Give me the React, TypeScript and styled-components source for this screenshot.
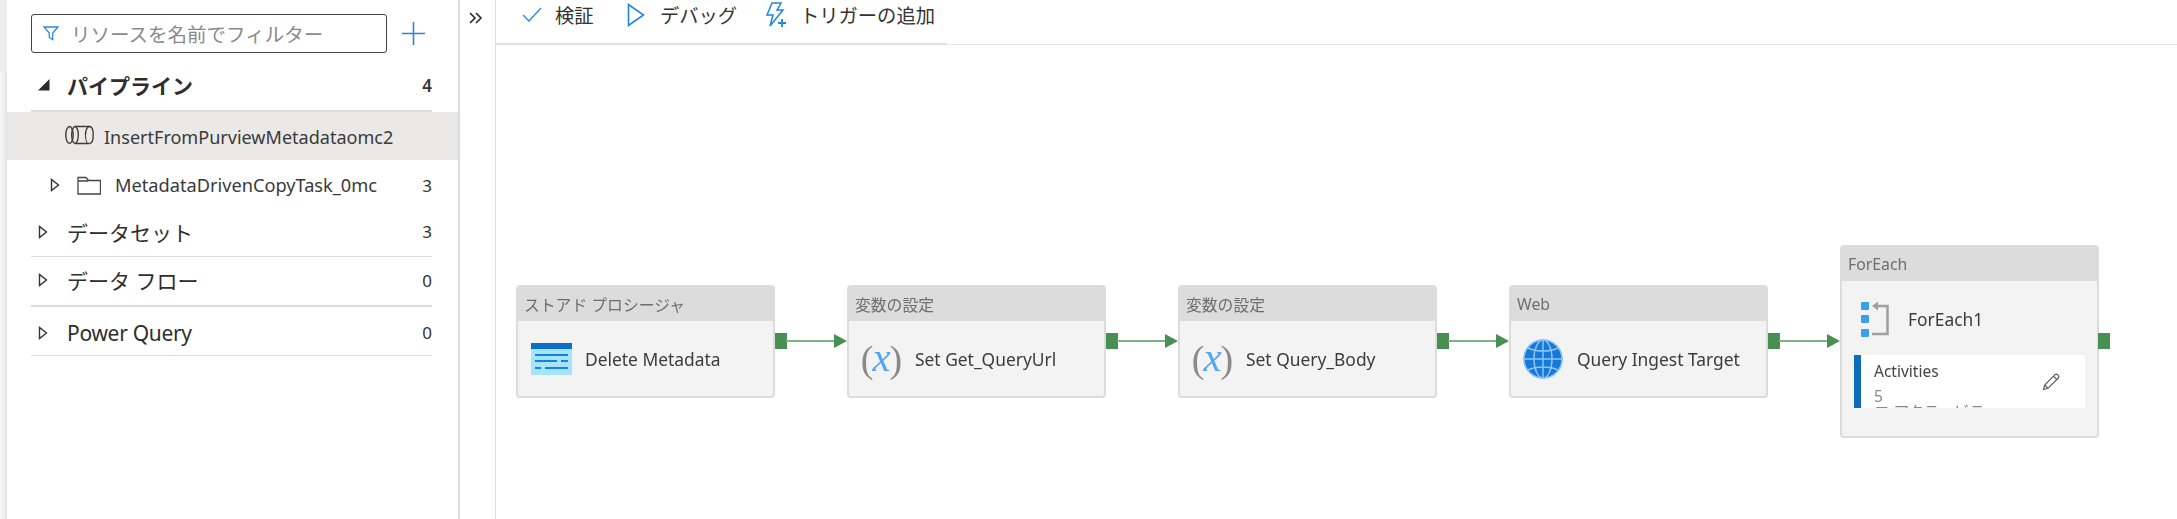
import React from "react";
import styled, { createGlobalStyle } from "styled-components";

const FONT = `"Noto Sans", "Noto Sans CJK JP", sans-serif`;

const GlobalStyle = createGlobalStyle`
  html, body {
    margin: 0;
    padding: 0;
    height: 519px;
    overflow: hidden;
    background: #fff;
    font-family: ${FONT};
  }
`;

const FilterIcon = () => (
  <svg width="18" height="18" viewBox="0 0 18 18" fill="none" stroke="#2b88d8" strokeWidth="1.3">
    <path d="M2 3h14l-5.3 6v6.5l-3.4-2V9z" />
  </svg>
);
const PlusIcon = () => (
  <svg width="23" height="23" viewBox="0 0 23 23" stroke="#3a7fd5" strokeWidth="1.6">
    <path d="M11.500 0v23M0 11.500h23" />
  </svg>
);
const Caret = ({ open }: { open?: boolean }) =>
  open ? (
    <svg width="12" height="12" viewBox="0 0 12 12">
      <path d="M0 11.5h11.5V0z" fill="#2b2b2b" />
    </svg>
  ) : (
    <svg width="10" height="14" viewBox="0 0 10 14" fill="none" stroke="#333" strokeWidth="1.4">
      <path d="M1.5 1.5v11L8.5 7z" />
    </svg>
  );
const PipelineIcon = () => (
  <svg width="29" height="20" viewBox="0 0 29 20" fill="none" stroke="#3c3c3c" strokeWidth="1.4">
    <ellipse cx="4.500" cy="10" rx="3.700" ry="8.500" />
    <ellipse cx="10" cy="10" rx="3.300" ry="8.500" />
    <path d="M10 1.500h14.500M10 18.500h14.500" />
    <path d="M20.500 10c0-4.500 1.500-8.500 4-8.500s3.700 4 3.700 8.500-1.200 8.500-3.700 8.500" />
    <path d="M20.500 10c0 4.500 1 7 2 8.500" strokeWidth="1" />
  </svg>
);
const FolderIcon = () => (
  <svg width="24" height="19" viewBox="0 0 24 19" fill="none" stroke="#444" strokeWidth="1.3">
    <path d="M1 18V1.500h8l2.500 3h12V18zM1 5h10" />
  </svg>
);
const Chevrons = () => (
  <svg width="14" height="12" viewBox="0 0 14 12" fill="none" stroke="#222" strokeWidth="1.500">
    <path d="M1 1l5 5-5 5M7 1l5 5-5 5" />
  </svg>
);
const CheckIcon = () => (
  <svg width="20" height="16" viewBox="0 0 20 16" fill="none" stroke="#2b88d8" strokeWidth="1.300">
    <path d="M1 8l6 6L19 1" />
  </svg>
);
const PlayIcon = () => (
  <svg width="18" height="24" viewBox="0 0 18 24" fill="none" stroke="#1d86e0" strokeWidth="1.600">
    <path d="M1.500 1.500v21L16.500 12z" />
  </svg>
);
const TriggerIcon = () => (
  <svg width="22" height="26" viewBox="0 0 22 26" fill="none" stroke="#1d86e0" strokeWidth="1.500">
    <path d="M7 1h9l-4 7h6L5 24l3-11H2z" />
    <path d="M17 17v8M13 21h8" strokeWidth="1.800" />
  </svg>
);
const StoredProcIcon = () => (
  <svg width="41" height="32" viewBox="0 0 41 32">
    <rect width="41" height="32" rx="1" fill="#a5e4fb" />
    <rect width="41" height="6" fill="#0a6fcb" />
    <path d="M4 12h33M4 18h22M30 18h7M4 25h6M14 25h23" stroke="#1483dc" strokeWidth="2" />
  </svg>
);
const GlobeIcon = () => (
  <svg width="40" height="40" viewBox="0 0 40 40" fill="none">
    <circle cx="20" cy="20" r="19.500" fill="#1878d8" />
    <g stroke="#8cc8f6" strokeWidth="1.400">
      <circle cx="20" cy="20" r="19" />
      <ellipse cx="20" cy="20" rx="9" ry="19" />
      <path d="M20 1v38M1 20h38M5 9c8 4 22 4 30 0M5 31c8-4 22-4 30 0" />
    </g>
  </svg>
);
const ForEachIcon = () => (
  <svg width="28" height="37" viewBox="0 0 28 37">
    <rect x="0" y="1" width="8" height="8" rx="1" fill="#3aa0ec" />
    <rect x="0" y="14" width="8" height="8" rx="1" fill="#3aa0ec" />
    <rect x="0" y="28" width="8" height="8" rx="1" fill="#3aa0ec" />
    <path d="M16 5h10.500v28H11" fill="none" stroke="#a0a0a0" strokeWidth="2.500" />
    <path d="M11 5l6-4.500v9z" fill="#a0a0a0" />
  </svg>
);
const PencilIcon = () => (
  <svg width="18" height="18" viewBox="0 0 18 18" fill="none" stroke="#555" strokeWidth="1.100">
    <path d="M1.500 16.500l1.200-4.500L13 1.700a1.700 1.700 0 0 1 2.400 0l.9.9a1.700 1.700 0 0 1 0 2.400L6 15.300zM2.700 12L6 15.300M11.500 3.200l3.300 3.300" />
  </svg>
);

const Page = styled.div`
  display: flex;
  width: 2177px;
  height: 519px;
  overflow: hidden;
`;
const EdgeStrip = styled.div`
  width: 7px;
  flex-shrink: 0;
  background:
    linear-gradient(#ececec, #ececec) top left / 100% 72px no-repeat,
    linear-gradient(90deg, #f8f8f8 0%, #efefef 60%, #e2e2e2 100%);
`;
const Sidebar = styled.aside`
  width: 451px;
  flex-shrink: 0;
  border-right: 2px solid #dcdcdc;
  display: flex;
  flex-direction: column;
`;
const SearchRow = styled.div`
  display: flex;
  align-items: center;
  padding: 14px 0 0 24px;
  height: 38px;
  gap: 15px;
`;
const SearchBox = styled.div`
  box-sizing: border-box;
  width: 356px;
  height: 39px;
  border: 1px solid #444;
  border-radius: 3px;
  display: flex;
  align-items: center;
  padding-left: 10px;
  gap: 11px;
  color: #8a8a8a;
  font-size: 19.500px;
  white-space: nowrap;
`;
const Section = styled.div<{ $height: number; $thick?: boolean; $shift?: number; $lift?: number }>`
  box-sizing: border-box;
  height: ${(p) => p.$height}px;
  margin: 0 26px 0 24px;
  padding-top: ${(p) => p.$shift ?? 0}px;
  padding-bottom: ${(p) => p.$lift ?? 0}px;
  border-bottom: ${(p) => (p.$thick ? 2 : 1)}px solid #dcdcdc;
  display: flex;
  align-items: center;
  color: #2e2e2e;
  font-size: 21px;
`;
const CaretSlot = styled.span`
  width: 36px;
  padding-left: 7px;
  box-sizing: border-box;
  display: flex;
  align-items: center;
`;
const Label = styled.span<{ $bold?: boolean; $tight?: boolean }>`
  flex: 1;
  font-weight: ${(p) => (p.$bold ? 700 : 400)};
  letter-spacing: ${(p) => (p.$tight ? "-0.3px" : "0")};
  white-space: nowrap;
`;
const Count = styled.span<{ $bold?: boolean }>`
  font-size: 17px;
  font-weight: ${(p) => (p.$bold ? 600 : 400)};
  width: 10px;
  text-align: right;
  color: #333;
`;
const SelectedRow = styled.div`
  height: 48px;
  background: #ebe9e7;
  display: flex;
  align-items: center;
  padding-left: 58px;
  gap: 10px;
  color: #3a3a3a;
  font-size: 18.050px;
  white-space: nowrap;
  span {
    padding-top: 2px;
  }
  svg {
    margin-top: -3px;
  }
`;
const FolderRow = styled.div`
  height: 50px;
  margin: 0 26px 0 0;
  display: flex;
  align-items: center;
  padding-left: 43px;
  color: #3a3a3a;
  font-size: 18.200px;
  gap: 17px;
  white-space: nowrap;
`;
const FolderName = styled.span`
  flex: 1;
  margin-left: -3px;
`;
const CollapseColumn = styled.div`
  width: 36px;
  flex-shrink: 0;
  border-right: 1px solid #dcdcdc;
  padding: 7px 0 0 9px;
  box-sizing: border-box;
`;
const Main = styled.main`
  flex: 1;
  display: flex;
  flex-direction: column;
`;
const Toolbar = styled.div`
  height: 45px;
  box-sizing: border-box;
  flex-shrink: 0;
  border-bottom: 1px solid #e6e6e6;
  position: relative;
  display: flex;
  align-items: flex-start;
  padding: 2px 0 0 26px;
  &::after {
    content: "";
    position: absolute;
    left: 0;
    bottom: -1px;
    width: 450px;
    height: 2px;
    background: #e0e0e0;
  }
`;
const ToolButton = styled.div<{ $gap: number; $width: number }>`
  display: flex;
  align-items: center;
  height: 26px;
  width: ${(p) => p.$width}px;
  gap: ${(p) => p.$gap}px;
  font-size: 19.300px;
  color: #333;
  white-space: nowrap;
`;
const Canvas = styled.div`
  position: relative;
  flex: 1;
`;
const Node = styled.div<{ $x: number; $y: number; $h: number }>`
  position: absolute;
  left: ${(p) => p.$x}px;
  top: ${(p) => p.$y}px;
  width: 259px;
  height: ${(p) => p.$h}px;
  box-sizing: border-box;
  border: 2px solid #dcdcdc;
  border-radius: 4px;
  background: #f3f3f3;
  filter: blur(0.4px);
`;
const NodeHeader = styled.div`
  height: 34px;
  background: #dcdcdc;
  display: flex;
  align-items: center;
  padding-left: 6px;
  color: #6e6e6e;
  font-size: 15.800px;
  white-space: nowrap;
`;
const NodeBody = styled.div<{ $gap: number; $pad: number; $h: number }>`
  display: flex;
  align-items: center;
  height: ${(p) => p.$h}px;
  padding-left: ${(p) => p.$pad}px;
  gap: ${(p) => p.$gap}px;
  color: #3c3c3c;
  font-size: 17.400px;
  white-space: nowrap;
`;
const VarGlyph = styled.span`
  display: inline-flex;
  align-items: center;
  justify-content: center;
  width: 41px;
  font-family: "Liberation Serif", serif;
  font-size: 38px;
  line-height: 1;
  color: #8a8a8a;
  i {
    color: #5aa5f0;
    font-size: 41px;
    margin: -3px -1px 0;
  }
`;
const ActivitiesPanel = styled.div`
  position: relative;
  box-sizing: border-box;
  height: 53px;
  margin: -2px 12px 0;
  background: #fff;
  border-left: 7px solid #0f6cbd;
  overflow: hidden;
  padding: 6px 0 0 13px;
  color: #444;
  font-size: 15.500px;
  line-height: 20px;
`;
const ActivitiesCount = styled.div`
  color: #8a8a8a;
  margin-top: 7px;
  line-height: 16px;
`;
const ActivitiesClip = styled.div`
  color: #8a8a8a;
  white-space: nowrap;
  line-height: 16px;
`;
const EditButton = styled.span`
  position: absolute;
  right: 25px;
  top: 18px;
  display: flex;
`;
const Port = styled.div<{ $x: number }>`
  position: absolute;
  left: ${(p) => p.$x}px;
  top: 288px;
  width: 12px;
  height: 16px;
  background: #4a8f52;
`;
const Link = styled.div<{ $x: number }>`
  position: absolute;
  left: ${(p) => p.$x}px;
  top: 295px;
  width: 48px;
  height: 2px;
  background: #7fb386;
`;
const Arrow = styled.div<{ $x: number }>`
  position: absolute;
  left: ${(p) => p.$x}px;
  top: 289px;
  width: 0;
  height: 0;
  border-top: 7.500px solid transparent;
  border-bottom: 7.500px solid transparent;
  border-left: 13px solid #4a8f52;
`;

const OFFSET = 496;
const NODES = [
  { x: 516, kind: "ストアド プロシージャ", name: "Delete Metadata", icon: <StoredProcIcon />, pad: 13, gap: 13 },
  { x: 847, kind: "変数の設定", name: "Set Get_QueryUrl", icon: null, pad: 12, gap: 13 },
  { x: 1178, kind: "変数の設定", name: "Set Query_Body", icon: null, pad: 12, gap: 13 },
  { x: 1509, kind: "Web", name: "Query Ingest Target", icon: <GlobeIcon />, pad: 12, gap: 14 },
];

export default function App() {
  return (
    <Page>
      <GlobalStyle />
      <EdgeStrip />
      <Sidebar>
        <SearchRow>
          <SearchBox>
            <FilterIcon />
            リソースを名前でフィルター
          </SearchBox>
          <PlusIcon />
        </SearchRow>
        <Section $height={60} $thick $shift={8}>
          <CaretSlot>
            <Caret open />
          </CaretSlot>
          <Label $bold>パイプライン</Label>
          <Count $bold>4</Count>
        </Section>
        <SelectedRow>
          <PipelineIcon />
          <span>InsertFromPurviewMetadataomc2</span>
        </SelectedRow>
        <FolderRow>
          <Caret />
          <FolderIcon />
          <FolderName>MetadataDrivenCopyTask_0mc</FolderName>
          <Count>3</Count>
        </FolderRow>
        <Section $height={47} $lift={3}>
          <CaretSlot>
            <Caret />
          </CaretSlot>
          <Label>データセット</Label>
          <Count>3</Count>
        </Section>
        <Section $height={50} $thick $lift={2}>
          <CaretSlot>
            <Caret />
          </CaretSlot>
          <Label>データ フロー</Label>
          <Count>0</Count>
        </Section>
        <Section $height={49} $shift={3}>
          <CaretSlot>
            <Caret />
          </CaretSlot>
          <Label $tight>Power Query</Label>
          <Count>0</Count>
        </Section>
      </Sidebar>
      <CollapseColumn>
        <Chevrons />
      </CollapseColumn>
      <Main>
        <Toolbar>
          <ToolButton $gap={13} $width={105}>
            <CheckIcon />
            検証
          </ToolButton>
          <ToolButton $gap={15} $width={138}>
            <PlayIcon />
            デバッグ
          </ToolButton>
          <ToolButton $gap={13} $width={190}>
            <TriggerIcon />
            トリガーの追加
          </ToolButton>
        </Toolbar>
        <Canvas>
          {NODES.map((n) => (
            <React.Fragment key={n.x}>
              <Node $x={n.x - OFFSET} $y={240} $h={113}>
                <NodeHeader>{n.kind}</NodeHeader>
                <NodeBody $pad={n.pad} $gap={n.gap} $h={76}>
                  {n.icon ?? (
                    <VarGlyph>
                      (<i>x</i>)
                    </VarGlyph>
                  )}
                  {n.name}
                </NodeBody>
              </Node>
              <Port $x={n.x - OFFSET + 259} />
              <Link $x={n.x - OFFSET + 270} />
              <Arrow $x={n.x - OFFSET + 318} />
            </React.Fragment>
          ))}
          <Node $x={1840 - OFFSET} $y={200} $h={193}>
            <NodeHeader>ForEach</NodeHeader>
            <NodeBody $pad={19} $gap={19} $h={76}>
              <ForEachIcon />
              ForEach1
            </NodeBody>
            <ActivitiesPanel>
              Activities
              <ActivitiesCount>5</ActivitiesCount>
              <ActivitiesClip>ロ アクティビティ</ActivitiesClip>
              <EditButton>
                <PencilIcon />
              </EditButton>
            </ActivitiesPanel>
          </Node>
          <Port $x={2098 - OFFSET} />
        </Canvas>
      </Main>
    </Page>
  );
}
